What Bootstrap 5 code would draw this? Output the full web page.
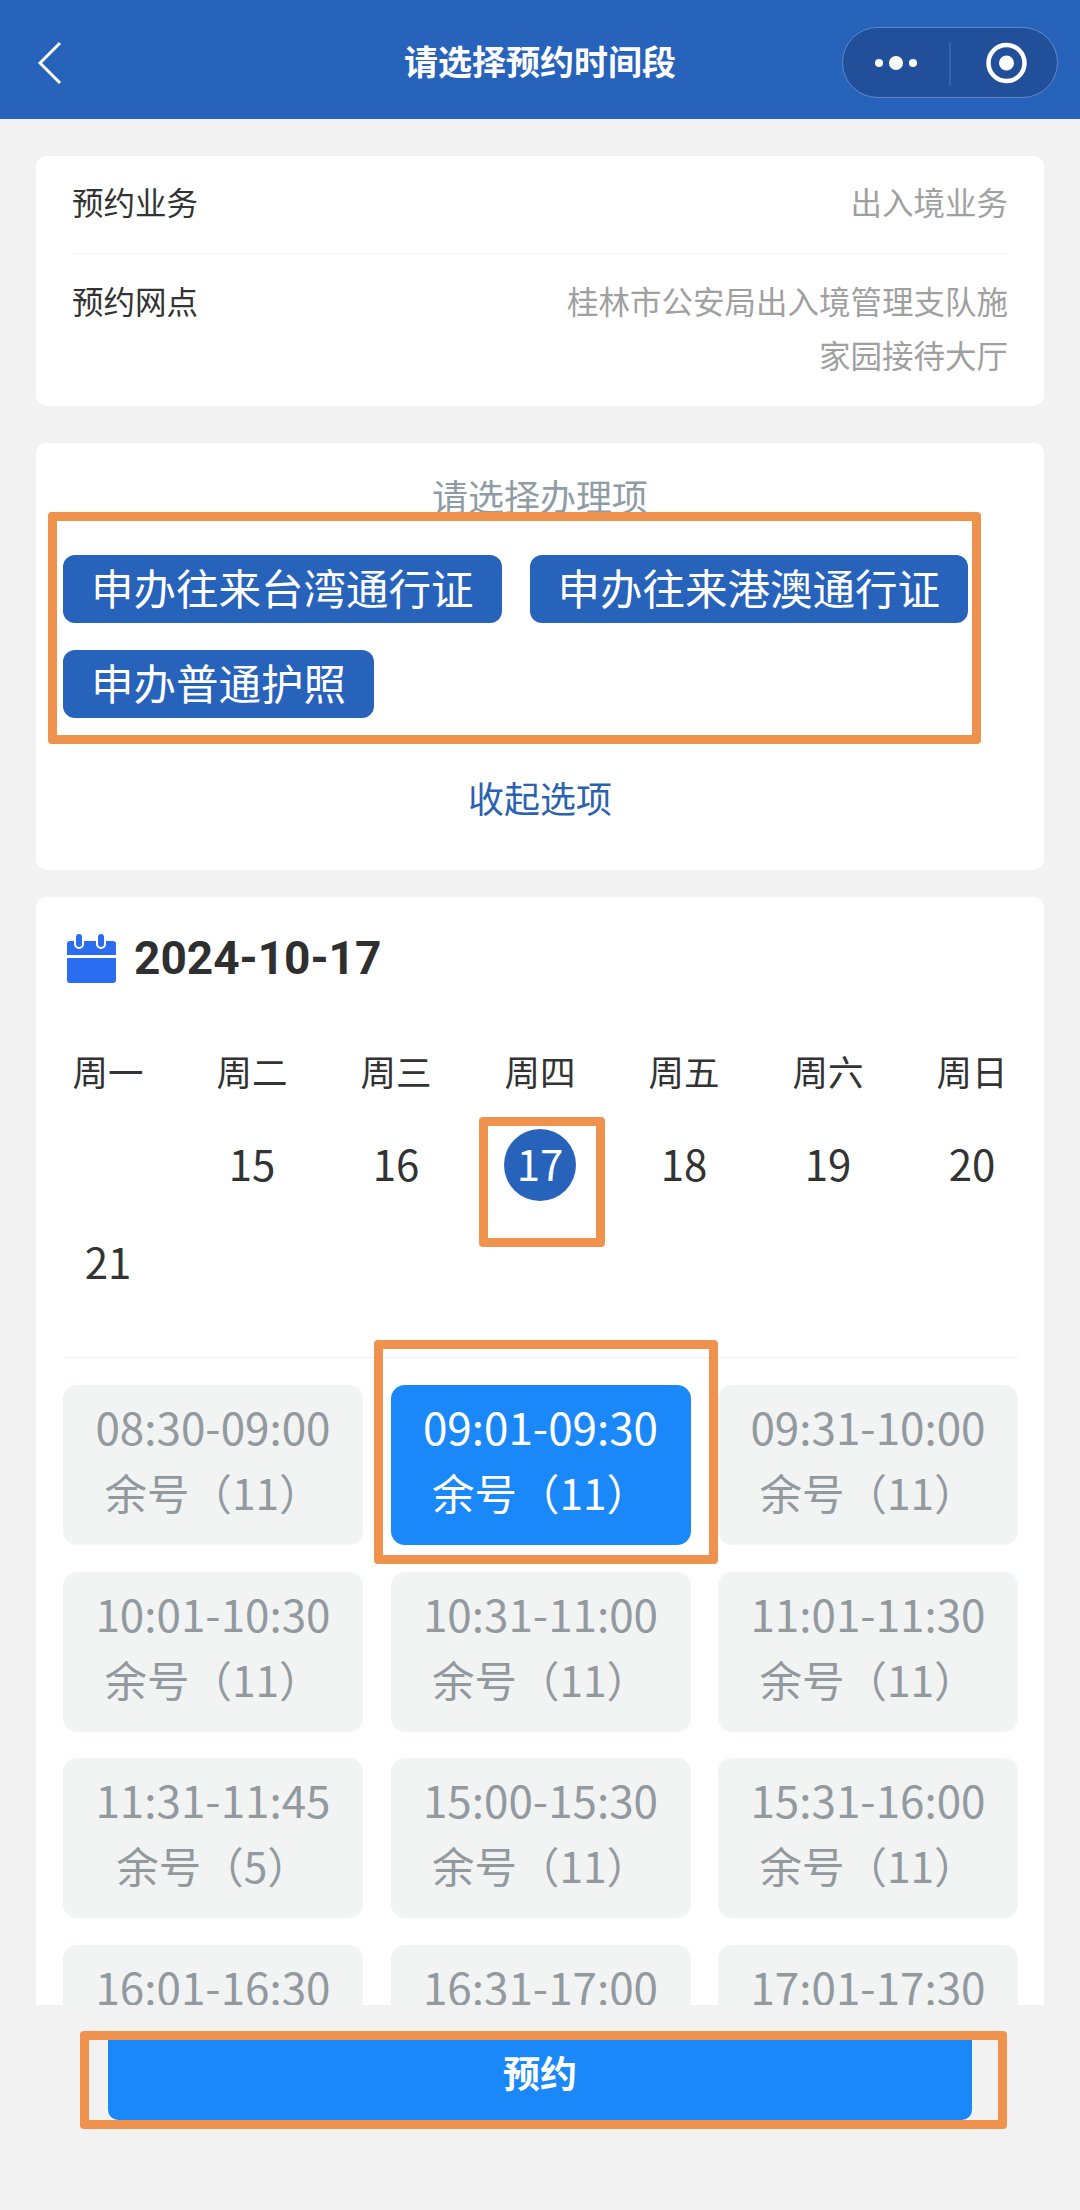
<!DOCTYPE html>
<html lang="zh-CN">
<head>
  <meta charset="UTF-8">
  <title>请选择预约时间段</title>
  <meta name="viewport" content="width=device-width, initial-scale=1.0"/>
  <link href="https://cdn.jsdelivr.net/npm/bootstrap@5.3.0/dist/css/bootstrap.min.css" rel="stylesheet">
  <style>
    html, body { height: 100%; }
    body {
      background: #f2f2f2;
      color: #333;
      font-family: "Noto Sans CJK SC", "Noto Sans", sans-serif;
      overflow: hidden;
    }
    .top-bar { height: 119px; background: #2762bb; flex: none; }
    .top-back { left: 38px; top: 41px; }
    .top-title { font-size: 34px; font-weight: 700; line-height: 50px; padding-top: 3px; color: #fff; }
    .capsule { left: 842px; top: 27px; width: 216px; height: 71px; }
    .page-main { padding: 37px 36px 0; min-height: 0; }
    .info-card, .pick-card, .cal-card { border: 0; border-radius: 10px; background: #fff; }
    .info-card { height: 250px; padding: 0 36px; flex: none; font-size: 31.5px; line-height: 54px; margin-bottom: 37px; }
    .info-row { padding-top: 18px; padding-bottom: 25px; border-bottom: 1px solid #f3f3f3; }
    .info-row + .info-row { padding-top: 19px; padding-bottom: 25px; border-bottom: 0; }
    .info-label { flex: none; color: #333; }
    .info-value { color: #a0a0a0; width: 460px; text-align: right; }
    .pick-card { height: 427px; flex: none; margin-bottom: 27px; }
    .pick-title { font-size: 36px; line-height: 50px; margin-top: 27px; color: #8f9ca6; }
    .pick-btns { padding-left: 27px; margin-top: 35px; column-gap: 28px; row-gap: 27px; width: 960px; }
    .pick-btn {
      height: 68px; padding: 0 28px 4px; font-size: 42.5px; line-height: 60px; color: #fff;
      background: #2762bb; border: 0; border-radius: 12px;
    }
    .pick-toggle { font-size: 36px; line-height: 50px; margin-top: 54px; color: #2a62b0; }
    .cal-card { flex: none; }
    .cal-head { padding: 36px 0 0 31px; gap: 18px; }
    .cal-date { font-family: Roboto, sans-serif; font-size: 46px; font-weight: 700; line-height: 44px; color: #2f2f2f; }
    .week-grid { display: grid; grid-template-columns: repeat(7, 144px); text-align: center; }
    .week-names { margin-top: 63px; font-size: 35.5px; line-height: 50px; margin-bottom: 20px; color: #333; }
    .day-cell { height: 98px; padding-bottom: 6px; font-size: 42px; color: #333; }
    .day-on { width: 72px; height: 72px; margin-top: 6px; padding-bottom: 6px; background: #2762bb; color: #fff; }
    .cal-line { height: 1px; background: #f0f0f0; margin: 45px 26px 27px 28px; }
    .slot-grid { display: grid; grid-template-columns: repeat(3, 300px); column-gap: 27.5px; row-gap: 26.5px; padding-left: 27px; }
    .slot-item {
      height: 160px; padding-top: 9px; background: #f2f3f3; color: #929a9f; border-radius: 14px;
      font-size: 42.5px; line-height: 65px; text-align: center;
    }
    .slot-time { font-size: 44px; }
    .slot-on { background: #1a88f8; color: #fff; }
    .page-foot { height: 205px; flex: none; background: #f2f2f2; padding-top: 35px; }
    .book-btn {
      width: 864px; height: 80px; background: #1a88f8; color: #fff; border: 0; border-radius: 0 0 10px 10px;
      font-size: 37px; font-weight: 700; padding: 0 0 14px;
    }
    .mark-box { position: absolute; border: 9px solid #ee924d; border-radius: 4px; pointer-events: none; }
    .mark-a { left: 48px; top: 512px; width: 933px; height: 232px; }
    .mark-b { left: 479px; top: 1117px; width: 126px; height: 130px; }
    .mark-c { left: 374px; top: 1340px; width: 344px; height: 224px; }
    .mark-d { left: 80px; top: 2031px; width: 927px; height: 98px; }
  </style>
</head>
<body class="d-flex flex-column position-relative">
  <header class="top-bar position-relative d-flex align-items-center justify-content-center">
    <svg class="top-back position-absolute" width="24" height="44" viewBox="0 0 24 44" fill="none" stroke="#fff" stroke-width="3">
      <polyline points="22,2 2,22 22,42"/>
    </svg>
    <div class="top-title">请选择预约时间段</div>
    <svg class="capsule position-absolute" viewBox="0 0 216 71">
      <rect x="0.5" y="0.5" width="215" height="70" rx="35" fill="#214f99" stroke="#5f8aca"/>
      <line x1="108" y1="15" x2="108" y2="59" stroke="#4f79ba"/>
      <circle cx="37" cy="36" r="4" fill="#fff"/>
      <circle cx="54" cy="36" r="7" fill="#fff"/>
      <circle cx="71" cy="36" r="4" fill="#fff"/>
      <circle cx="164.5" cy="36" r="18" fill="none" stroke="#fff" stroke-width="4.5"/>
      <circle cx="164.5" cy="36" r="7.5" fill="#fff"/>
    </svg>
  </header>

  <main class="page-main flex-grow-1 overflow-hidden d-flex flex-column">
    <section class="card info-card">
      <div class="info-row d-flex justify-content-between">
        <div class="info-label">预约业务</div>
        <div class="info-value">出入境业务</div>
      </div>
      <div class="info-row d-flex justify-content-between">
        <div class="info-label">预约网点</div>
        <div class="info-value">桂林市公安局出入境管理支队施家园接待大厅</div>
      </div>
    </section>

    <section class="card pick-card">
      <div class="pick-title text-center">请选择办理项</div>
      <div class="pick-btns d-flex flex-wrap">
        <button class="btn pick-btn">申办往来台湾通行证</button>
        <button class="btn pick-btn">申办往来港澳通行证</button>
        <button class="btn pick-btn">申办普通护照</button>
      </div>
      <div class="pick-toggle text-center">收起选项</div>
    </section>

    <section class="card cal-card">
      <div class="cal-head d-flex align-items-center">
        <svg width="49" height="50" viewBox="0 0 49 50">
          <path d="M3 8h43a3 3 0 0 1 3 3v11H0V11a3 3 0 0 1 3-3z" fill="#2a6df0"/>
          <path d="M0 25h49v22a3 3 0 0 1-3 3H3a3 3 0 0 1-3-3z" fill="#2a6df0"/>
          <rect x="8" y="0" width="8" height="15" rx="4" fill="#2a6df0" stroke="#fff" stroke-width="2"/>
          <rect x="30" y="0" width="8" height="15" rx="4" fill="#2a6df0" stroke="#fff" stroke-width="2"/>
        </svg>
        <div class="cal-date">2024-10-17</div>
      </div>

      <div class="week-grid week-names">
        <div>周一</div><div>周二</div><div>周三</div><div>周四</div><div>周五</div><div>周六</div><div>周日</div>
      </div>
      <div class="week-grid" id="days"></div>
      <div class="cal-line"></div>
      <div class="slot-grid" id="slots"></div>
    </section>
  </main>

  <footer class="page-foot d-flex justify-content-center align-items-start">
    <button class="btn book-btn">预约</button>
  </footer>

  <div class="mark-box mark-a"></div>
  <div class="mark-box mark-b"></div>
  <div class="mark-box mark-c"></div>
  <div class="mark-box mark-d"></div>

  <script src="https://cdn.jsdelivr.net/npm/bootstrap@5.3.0/dist/js/bootstrap.bundle.min.js"></script>
  <script>
    const days = ['', 15, 16, 17, 18, 19, 20, 21];
    document.getElementById('days').innerHTML = days.map(d => {
      const inner = d === 17
        ? `<div class="day-on rounded-circle d-flex align-items-center justify-content-center">${d}</div>`
        : d;
      return `<div class="day-cell d-flex align-items-center justify-content-center">${inner}</div>`;
    }).join('');

    // last row sits under the footer, only its time line is visible
    const slots = [
      ['08:30-09:00', 11], ['09:01-09:30', 11], ['09:31-10:00', 11],
      ['10:01-10:30', 11], ['10:31-11:00', 11], ['11:01-11:30', 11],
      ['11:31-11:45', 5], ['15:00-15:30', 11], ['15:31-16:00', 11],
      ['16:01-16:30'], ['16:31-17:00'], ['17:01-17:30']
    ];
    document.getElementById('slots').innerHTML = slots.map((s, i) => `
      <div class="slot-item ${i === 1 ? 'slot-on' : ''}">
        <div class="slot-time">${s[0]}</div>
        ${s[1] ? `<div>余号（${s[1]}）</div>` : ''}
      </div>`).join('');
  </script>
</body>
</html>
